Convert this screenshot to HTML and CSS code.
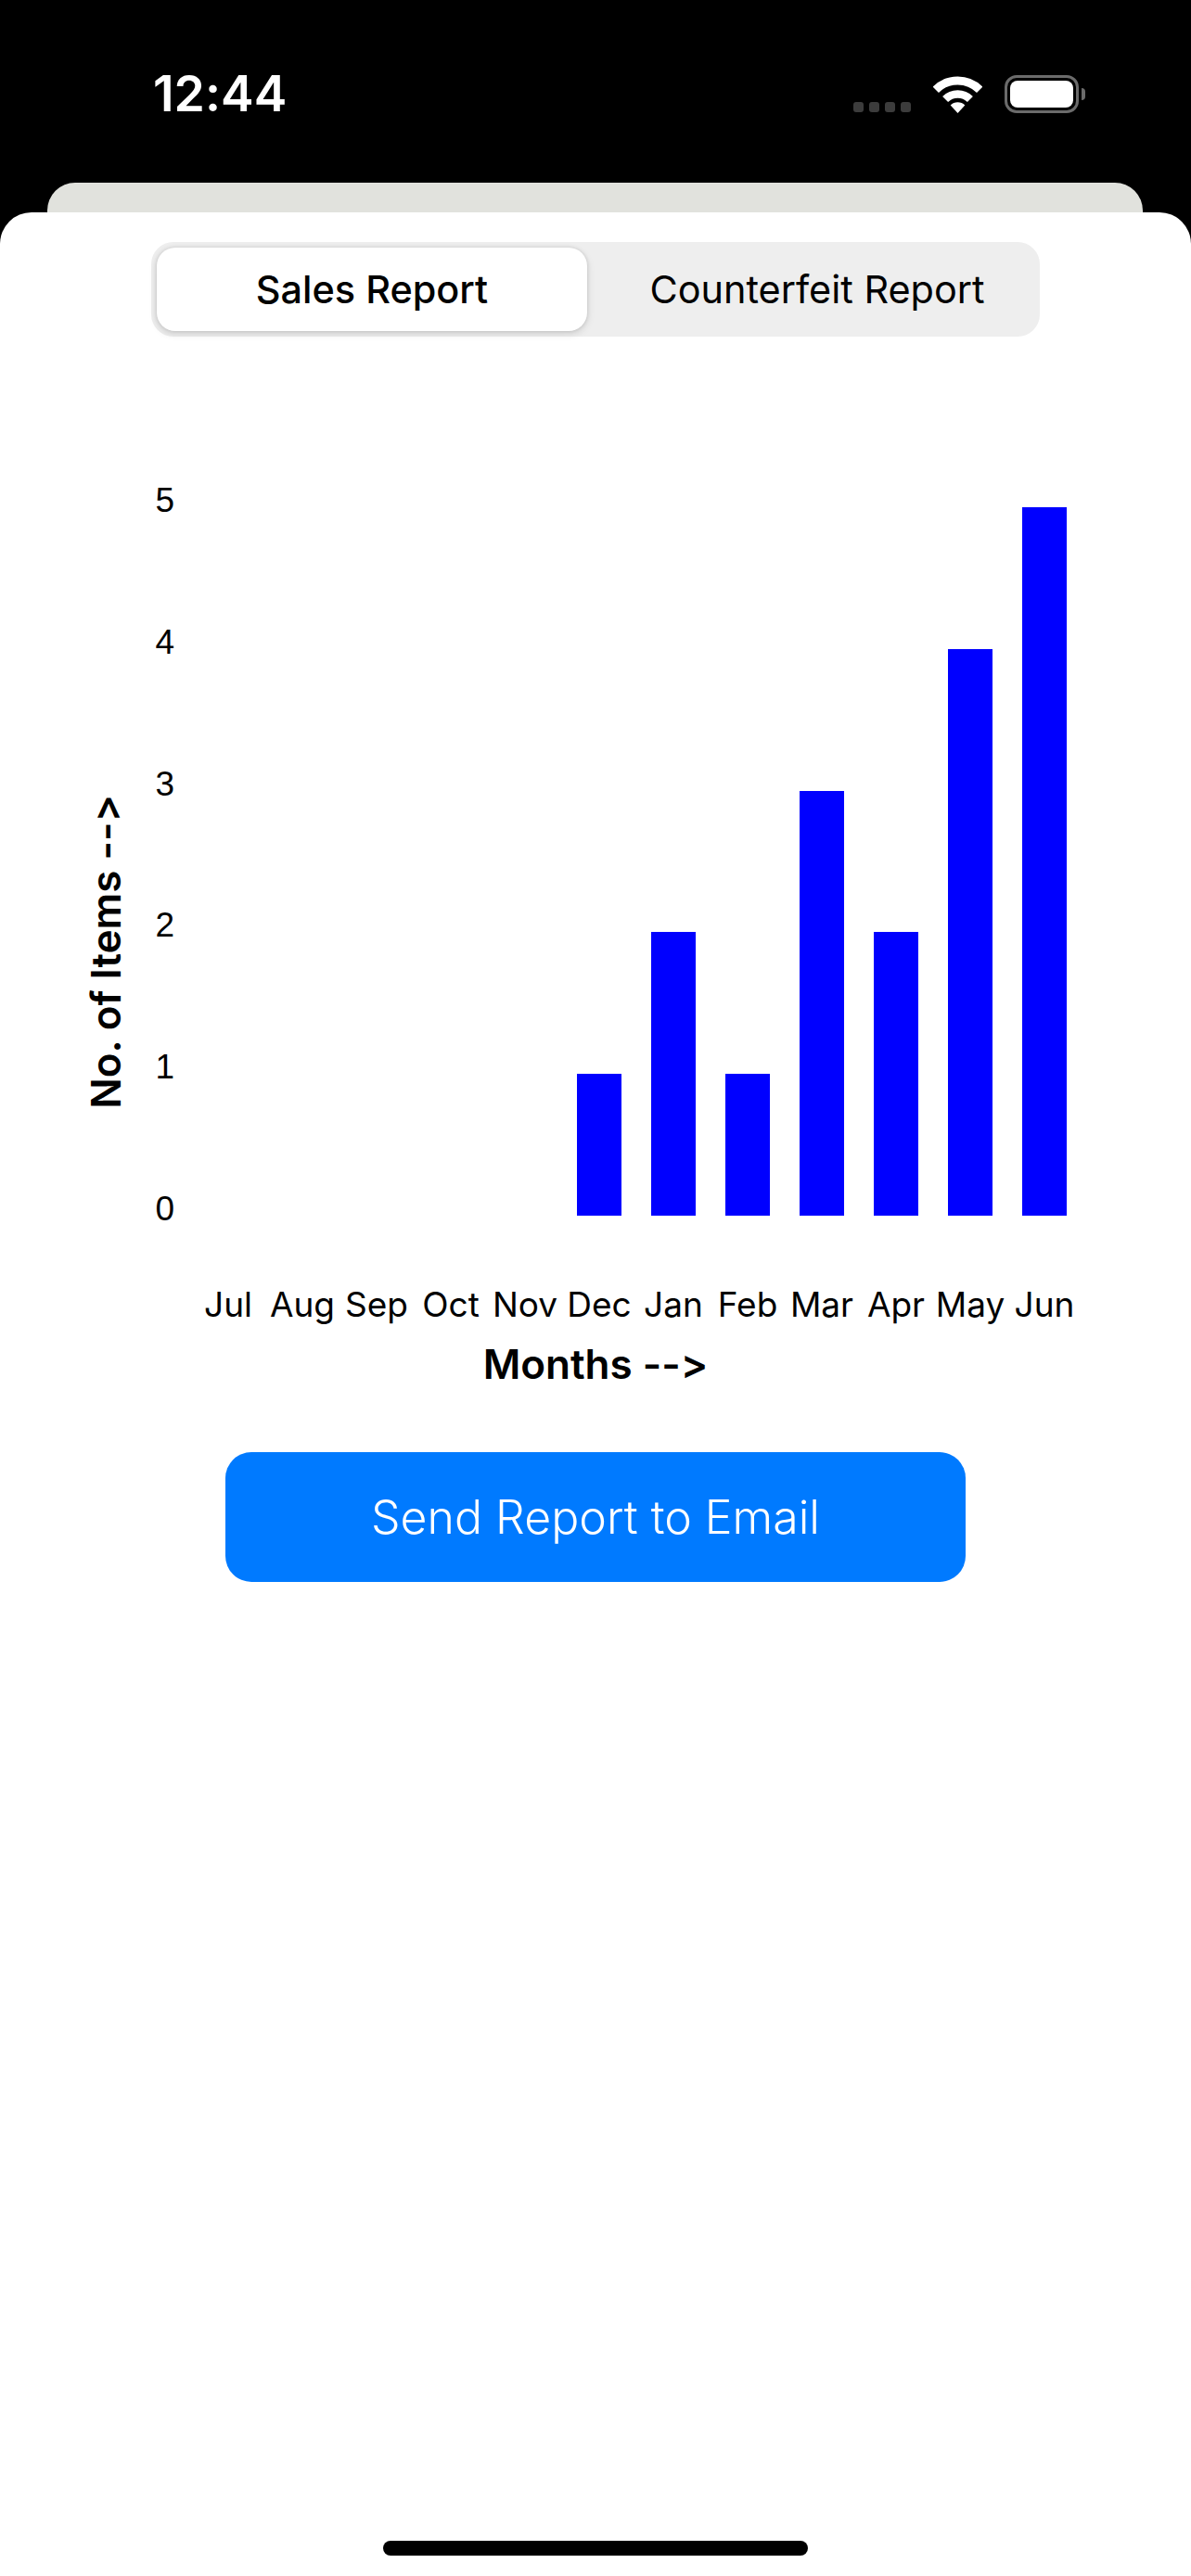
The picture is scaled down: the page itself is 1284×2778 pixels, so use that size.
FILE: index.html
```html
<!DOCTYPE html>
<html lang="en">
<head>
<meta charset="utf-8">
<title>Reports</title>
<link rel="stylesheet" href="styles.css">
</head>
<body>
<div class="phone">
  <header class="status">
    <span class="time">12:44</span>
    <div class="status-icons">
      <div class="dots"><i></i><i></i><i></i><i></i></div>
      <svg class="wifi" width="53" height="40" viewBox="0 0 53 40">
        <path d="M2.8 14.8A33.5 33.5 0 0 1 50.2 14.8" fill="none" stroke="#fff" stroke-width="9"/>
        <path d="M13.1 25.1A19 19 0 0 1 39.9 25.1" fill="none" stroke="#fff" stroke-width="8.5"/>
        <path d="M26.5 40L18.7 31.4A11 11 0 0 1 34.3 31.4Z" fill="#fff"/>
      </svg>
      <div class="battery"><div class="battery-fill"></div></div>
      <div class="battery-nub"></div>
    </div>
  </header>
  <div class="back-card"></div>
  <main class="sheet">
    <div class="segment">
      <div class="seg seg-on">Sales Report</div>
      <div class="seg">Counterfeit Report</div>
    </div>
    <section class="chart">
      <div class="plot">
        <div class="y-title">No. of Items --&gt;</div>
        <div class="y-axis"><span>5</span><span>4</span><span>3</span><span>2</span><span>1</span><span>0</span></div>
        <div class="bars">
          <div class="col"></div><div class="col"></div><div class="col"></div><div class="col"></div><div class="col"></div>
          <div class="col"><div class="bar" style="height:153px"></div></div>
          <div class="col"><div class="bar" style="height:306px"></div></div>
          <div class="col"><div class="bar" style="height:153px"></div></div>
          <div class="col"><div class="bar" style="height:458px"></div></div>
          <div class="col"><div class="bar" style="height:306px"></div></div>
          <div class="col"><div class="bar" style="height:611px"></div></div>
          <div class="col"><div class="bar" style="height:764px"></div></div>
        </div>
      </div>
      <div class="months">
        <span>Jul</span><span>Aug</span><span>Sep</span><span>Oct</span><span>Nov</span><span>Dec</span><span>Jan</span><span>Feb</span><span>Mar</span><span>Apr</span><span>May</span><span>Jun</span>
      </div>
      <div class="x-title">Months --&gt;</div>
    </section>
    <button class="send">Send Report to Email</button>
    <div class="home-bar"></div>
  </main>
</div>
</body>
</html>
```

FILE: styles.css
```css
* { box-sizing: border-box; }
html, body { margin: 0; padding: 0; background: #000; }
.phone {
  width: 1284px;
  height: 2778px;
  display: flex;
  flex-direction: column;
  overflow: hidden;
  background: #000;
  font-family: Inter, "Liberation Sans", sans-serif;
  font-feature-settings: "calt" 0, "liga" 0;
  color: #000;
}
.status {
  height: 197px;
  flex: none;
  padding: 73px 0 0 165px;
  display: flex;
  align-items: flex-start;
}
.time {
  width: 143px;
  color: #fff;
  font-size: 53.5px;
  line-height: 56px;
  font-weight: 600;
  white-space: nowrap;
}
.status-icons {
  margin-left: 612px;
  margin-top: 8px;
  display: flex;
  align-items: flex-start;
}
.dots {
  display: flex;
  gap: 6px;
  margin-top: 29px;
  margin-right: 24px;
}
.dots i {
  display: block;
  width: 11px;
  height: 11px;
  border-radius: 3px;
  background: #3c3c3c;
}
.wifi { display: block; margin-top: 1px; margin-right: 24px; }
.battery {
  width: 80px;
  height: 41px;
  border: 3px solid #6b6b6b;
  border-radius: 13px;
  padding: 3px;
}
.battery-fill { width: 100%; height: 100%; background: #fff; border-radius: 8px; }
.battery-nub {
  width: 4px;
  height: 13px;
  margin: 14px 0 0 3px;
  background: #6b6b6b;
  border-radius: 0 7px 7px 0;
}
.back-card {
  height: 32px;
  flex: none;
  margin: 0 52px 0 51px;
  background: #e1e2dd;
  border-radius: 30px 30px 0 0;
}
.sheet {
  flex: 1;
  background: #fff;
  border-radius: 34px 34px 0 0;
  padding-top: 32px;
  display: flex;
  flex-direction: column;
  align-items: center;
}
.segment {
  width: 958px;
  height: 102px;
  display: flex;
  background: #eeeeee;
  border-radius: 24px;
  padding: 6px 0 6px 6px;
}
.seg {
  flex: 1;
  display: flex;
  align-items: center;
  justify-content: center;
  padding-left: 8px;
  font-size: 41.4px;
  font-weight: 400;
  white-space: nowrap;
}
.seg-on {
  flex: none;
  width: 464px;
  padding-left: 0;
  background: #fff;
  border-radius: 20px;
  font-weight: 500;
  box-shadow: 0 3px 8px rgba(0,0,0,.13), 0 0 4px rgba(0,0,0,.12);
}
.chart {
  width: 1284px;
  padding-top: 155px;
  display: flex;
  flex-direction: column;
}
.plot {
  height: 808px;
  display: flex;
  padding-left: 92px;
}
.y-title {
  writing-mode: vertical-rl;
  transform: rotate(180deg);
  align-self: flex-end;
  margin-bottom: 130px;
  width: 44px;
  font-size: 44px;
  line-height: 44px;
  font-weight: 600;
  white-space: nowrap;
  text-align: center;
}
.y-axis {
  width: 52px;
  height: 100%;
  display: flex;
  flex-direction: column;
  justify-content: space-between;
  align-items: flex-end;
  font-family: "Liberation Sans", sans-serif;
  font-size: 37px;
  line-height: 44px;
}
.bars {
  margin-left: 18px;
  margin-top: 29px;
  height: 764px;
  display: grid;
  grid-template-columns: repeat(12, 80px);
}
.col { display: flex; align-items: flex-end; justify-content: center; }
.bar { width: 48px; background: #0000ff; }
.months {
  margin-top: 59px;
  padding-left: 206px;
  display: grid;
  grid-template-columns: repeat(12, 80px);
  font-size: 37px;
  line-height: 44px;
  text-align: center;
  white-space: nowrap;
}
.months span { justify-self: center; }
.x-title {
  margin-top: 18px;
  text-align: center;
  font-size: 44px;
  line-height: 48px;
  font-weight: 600;
}
.send {
  margin-top: 71px;
  width: 798px;
  height: 140px;
  border: 0;
  padding: 0;
  border-radius: 28px;
  background: #007aff;
  color: #fff;
  font-family: inherit;
  font-feature-settings: inherit;
  font-size: 50px;
  font-weight: 300;
}
.home-bar {
  margin-top: auto;
  margin-bottom: 22px;
  width: 458px;
  height: 16px;
  border-radius: 8px;
  background: #000;
}
```
